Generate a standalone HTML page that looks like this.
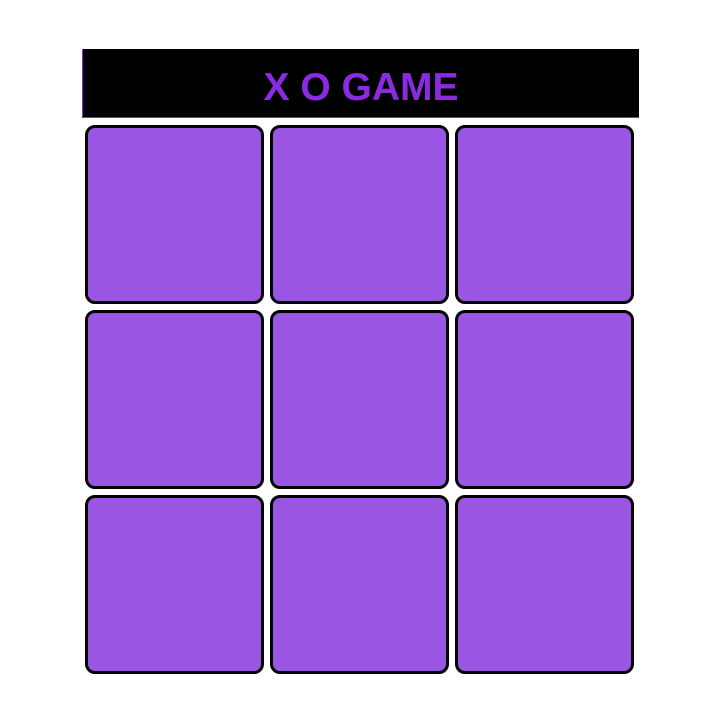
<!DOCTYPE html>
<html><head><style>
body{margin:0;width:720px;height:720px;background:#fff;position:relative;font-family:"Liberation Sans",sans-serif}
.h{position:absolute;left:82px;top:49px;width:556px;height:68px;background:#000;border-left:1px solid #8a2be2;border-bottom:1px solid #8a2be2;color:#8a2be2;font-weight:bold;font-size:39px;line-height:78px;text-align:center}
.c{position:absolute;width:173px;height:173px;background:#9b55e3;border:3px solid #000;border-radius:10px}
</style></head><body>
<div class="h">X O GAME</div>
<div class="c" style="left:85px;top:125px"></div>
<div class="c" style="left:270px;top:125px"></div>
<div class="c" style="left:455px;top:125px"></div>
<div class="c" style="left:85px;top:310px"></div>
<div class="c" style="left:270px;top:310px"></div>
<div class="c" style="left:455px;top:310px"></div>
<div class="c" style="left:85px;top:495px"></div>
<div class="c" style="left:270px;top:495px"></div>
<div class="c" style="left:455px;top:495px"></div>
</body></html>
